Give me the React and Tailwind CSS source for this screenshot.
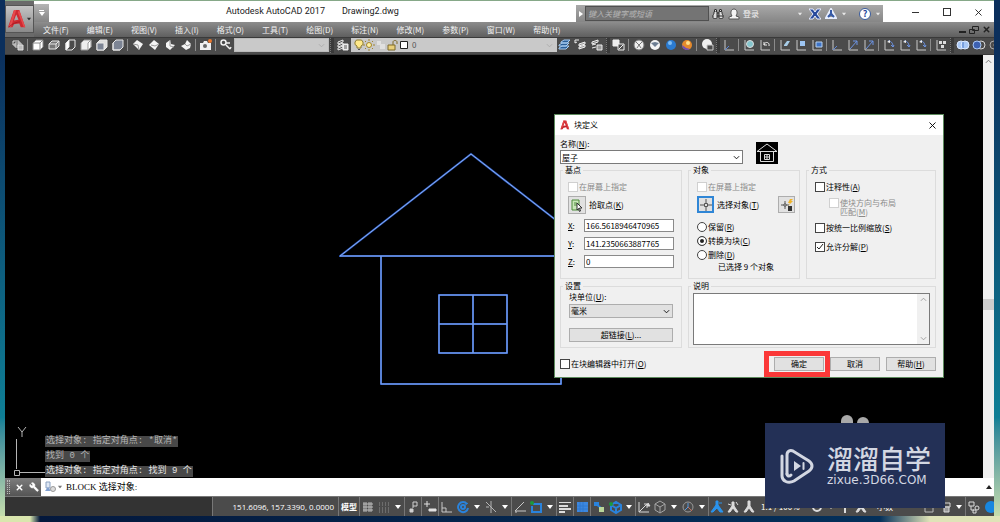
import { useState } from "react";
import { Binoculars, Wrench, X } from "lucide-react";

const MENUS = [
  "文件(F)",
  "编辑(E)",
  "视图(V)",
  "插入(I)",
  "格式(O)",
  "工具(T)",
  "绘图(D)",
  "标注(N)",
  "修改(M)",
  "参数(P)",
  "窗口(W)",
  "帮助(H)",
];

const HISTORY = [
  { text: "选择对象: 指定对角点: *取消*", tone: "text-[#b4b4b4]" },
  { text: "找到 0 个", tone: "text-[#b4b4b4]" },
  { text: "选择对象: 指定对角点: 找到 9 个", tone: "text-[#e4e4e4]" },
];

// ---------- icons (all drawn on a 14 x 14 grid) ----------

const UCS_AXES = <path d="M3 2v10h9" stroke="#c9c9c9" fill="none" />;

const ICONS = {
  views: (
    <g fill="#4b4b4b" stroke="#e0e0e0">
      <path d="M2 3h6v4H2zM4 5h6v4H4z" />
      <path d="M7 7h5v5H7z" fill="#bbb" />
    </g>
  ),
  cubeTop: (
    <g stroke="#8a8a8a">
      <path d="M2 5l3-3h7v7l-3 3H2z" fill="#fff" />
      <path d="M2 5h7v7M9 5l3-3" fill="none" />
    </g>
  ),
  cubeBottom: (
    <g stroke="#e8e8e8" fill="none">
      <path d="M2 6l3-3h7v5l-3 3H2z" fill="#777" />
      <path d="M2 6h7v5M9 6l3-3" />
    </g>
  ),
  cubeLeft: (
    <g stroke="#e8e8e8" fill="none">
      <path d="M3 5l3-3h6v7l-3 3H3z" />
      <path d="M3 5l3-3v7l-3 3z" fill="#fff" />
    </g>
  ),
  cubeRight: (
    <g stroke="#999">
      <path d="M2 5l3-3h7v7l-3 3H2z" fill="#eee" />
      <path d="M9 5l3-3v7l-3 3z" fill="#fff" />
    </g>
  ),
  cubeFront: (
    <g stroke="#e8e8e8">
      <path d="M2 5l3-3h7v7l-3 3H2z" fill="#ddd" />
      <path d="M2 5h7v7H2z" fill="#7c8494" />
    </g>
  ),
  cubeBack: (
    <g stroke="#e8e8e8">
      <path d="M2 5l3-3h7v7l-3 3H2z" fill="#7c8494" />
      <path d="M2 5v7h7l3-3" fill="none" />
    </g>
  ),
  isoSW: (
    <g>
      <path d="M2 6l4-4 6 4-4 6z" fill="#f4f4f4" />
      <path d="M2 6l5 1 1 5" stroke="#999" fill="none" />
    </g>
  ),
  isoSE: (
    <g>
      <path d="M2 7l5-5 5 4-4 6z" fill="#f4f4f4" />
      <path d="M4 7l4 1 4-2" stroke="#999" fill="none" />
    </g>
  ),
  isoNE: (
    <g>
      <path d="M3 5l4-3 1 4 4 1-5 5-4-3z" fill="#f4f4f4" />
      <path d="M7 2v6l4 1" stroke="#999" fill="none" />
    </g>
  ),
  isoNW: (
    <g>
      <path d="M2 8l4-2 2-4 4 4-1 4-4 2z" fill="#f4f4f4" />
      <path d="M6 6l2 2 4-2" stroke="#999" fill="none" />
    </g>
  ),
  camera: (
    <g>
      <path d="M1 5h3l1-2h3l1 2h3v7H1z" fill="#f0f0f0" />
      <circle cx="6" cy="8" r="2" fill="#666" />
      <circle cx="11" cy="3" r="2" fill="#e8772e" />
    </g>
  ),
  key: (
    <g fill="none" stroke="#f0f0f0" strokeWidth="1.5">
      <circle cx="4.500" cy="4.500" r="2.500" />
      <path d="M7 5h4M7 7l4 4M11 11l1-2" />
    </g>
  ),
  layers: (
    <g fill="#4b4b4b" stroke="#e8e8e8">
      <path d="M2 4l5-2v2L2 6zM2 7l5-2v2L2 9zM2 10l5-2v2l-5 2z" />
      <path d="M7 6h5v6H7z" fill="#eee" />
      <path d="M8 8h3M8 10h3" stroke="#555" />
    </g>
  ),
  layerCurrent: (
    <g stroke="#a9cdf3" fill="#2b5f98">
      <path d="M1 10l3-2h7l-3 3H1zM1 7l3-2h7l-3 3H1zM3 4l3-2h6l-3 3H3z" />
    </g>
  ),
  layerPrev: (
    <g stroke="#eee" fill="none">
      <path d="M1 5V2h4M3 4L1 5" />
      <path d="M5 6l6-2v2L5 8zM5 9l6-2v2l-6 2z" fill="#999" />
    </g>
  ),
  layerState: (
    <g stroke="#eee" fill="#777">
      <path d="M2 4l6-2v2L2 6zM2 7l4-1M2 10l4-1" />
      <path d="M7 7h5v5H7z" fill="#999" />
    </g>
  ),
  blocks: (
    <g stroke="#f0f0f0" fill="none">
      <path d="M1 2h6v6H1z" fill="#eee" />
      <path d="M6 6h6v6H6z" fill="#4b4b4b" />
      <path d="M7 11l4-4" />
    </g>
  ),
  wire: (
    <g stroke="#777" fill="#f0f0f0">
      <circle cx="7" cy="7" r="5" />
      <path d="M4 4l3 3 3-3M5 10l2-3 2 3" fill="none" />
    </g>
  ),
  hidden: (
    <g>
      <circle cx="7" cy="7" r="5" fill="#f4f4f4" />
      <path d="M3 5l4 4 4-4-4-1z" fill="#6c7d92" />
    </g>
  ),
  sphere: (
    <g>
      <circle cx="7" cy="7" r="5" fill="#2b7bd0" />
      <circle cx="6" cy="5" r="2" fill="#7fbdf5" />
    </g>
  ),
  realistic: (
    <g>
      <circle cx="7" cy="7" r="5" fill="#e58a2c" />
      <path d="M2 7a5 5 0 008 4Q5 10 2 7z" fill="#7450b5" />
      <circle cx="8" cy="5" r="2" fill="#ffe08a" />
    </g>
  ),
  manage: (
    <g>
      <circle cx="7" cy="6" r="5" fill="#f0f0f0" />
      <path d="M7 7h6v5H7z" fill="#4b4b4b" stroke="#ccc" />
    </g>
  ),
  ucs: (
    <g>
      {UCS_AXES}
      <path d="M3 12l4-4" stroke="#5c86d8" />
    </g>
  ),
  ucsWorld: (
    <g>
      {UCS_AXES}
      <circle cx="8" cy="6" r="3.500" fill="#84c4cc" stroke="#ddd" />
    </g>
  ),
  ucsPrev: (
    <g fill="none">
      {UCS_AXES}
      <path d="M6 7c1-4 6-3 5 1M6 4v3h3" stroke="#eee" />
    </g>
  ),
  ucsFace: (
    <g>
      {UCS_AXES}
      <path d="M6 7l3-4h3l-3 5H6z" fill="#a8cde8" />
    </g>
  ),
  ucsObject: (
    <g>
      {UCS_AXES}
      <path d="M6 3h5v5H6z" fill="#9ec6f3" />
    </g>
  ),
  ucsView: (
    <g>
      {UCS_AXES}
      <path d="M6 4h6v5H6z" fill="#3f74c7" stroke="#b8d2f0" />
    </g>
  ),
  ucsArrow: (
    <g fill="none">
      {UCS_AXES}
      <path d="M4 11l7-8M7 3h4v4" stroke="#6d94e4" />
    </g>
  ),
  ucsRotate: (
    <g fill="none">
      {UCS_AXES}
      <path d="M6 3c4 0 5 3 5 6M9 7l2 2 1-2" stroke="#6d94e4" />
      <path d="M5 4l3-2v3z" fill="#eee" />
    </g>
  ),
  ucsApply: (
    <g>
      {UCS_AXES}
      <path d="M5 3h3v3H5zM9 3h3v3H9zM7 7h3v3H7z" fill="#ddd" />
    </g>
  ),
  union: (
    <g fill="#a9c8f5" stroke="#dce9ff">
      <circle cx="5" cy="7" r="4" />
      <circle cx="9" cy="7" r="4" />
      <path d="M7 4v6" stroke="#4876c4" />
    </g>
  ),
  subtract: (
    <g fill="none" stroke="#d8d8d8">
      <circle cx="9" cy="7" r="4" />
      <circle cx="5" cy="7" r="4" fill="#3d61b0" stroke="#a9c8f5" />
    </g>
  ),
  intersect: (
    <g fill="none" stroke="#aaa">
      <circle cx="6" cy="7" r="4" />
      <circle cx="10" cy="7" r="4" />
    </g>
  ),
  // status bar
  grid: <path d="M3 2v10M5 2v10M8 2v10M10 2v10M2 4h10M2 7h10M2 10h10" stroke="#bdbdbd" />,
  snap: <path d="M2 3h10M2 5h10M2 8h10M2 10h10M2 12h10" stroke="#8f8f8f" strokeDasharray="1 2" />,
  infer: (
    <g stroke="#d0d0d0" fill="none">
      <path d="M7 8V2h4v4H7" />
      <path d="M4 9h3v3H4z" fill="#d0d0d0" />
    </g>
  ),
  dynamic: (
    <g stroke="#e0e0e0">
      <path d="M1 4h6M4 1v6" />
      <path d="M6 9h7v2H6z" fill="#e0e0e0" />
    </g>
  ),
  ortho: <path d="M2 2v10h10M2 8h4v4" stroke="#c8c8c8" fill="none" />,
  polar: (
    <g fill="none" stroke="#2a83dc" strokeWidth="2">
      <path d="M11 4a5 5 0 101 4" />
      <circle cx="7" cy="7" r="2" />
      <path d="M8 6l4-3" strokeWidth="1" />
    </g>
  ),
  isodraft: <path d="M2 2l10 10M7 1v12M2 7h3" stroke="#b5b5b5" />,
  tracking: <path d="M11 2L2 11h11M2 12h2" stroke="#c8c8c8" fill="none" />,
  osnap: (
    <g fill="none">
      <path d="M4 4h8v8H3V6" stroke="#2a83dc" strokeWidth="2" />
      <circle cx="3" cy="3" r="2" fill="#1d9a3a" />
    </g>
  ),
  lineweight: (
    <g fill="#dcdcdc">
      <path d="M1 2h12v1H1zM1 5h9v2H1zM1 8h12v2H1zM1 11h6v2H1z" />
    </g>
  ),
  transparency: (
    <g>
      <path d="M2 2h11v10H2z" fill="#3c87df" />
      <path d="M5 2v10M8 2v10M2 6h11M2 9h11" stroke="#2f78cf" />
    </g>
  ),
  cycling: (
    <g>
      <path d="M2 2h5v4H2z" fill="#2a83dc" />
      <path d="M4 4l5 4" stroke="#2a83dc" strokeWidth="2" />
      <path d="M7 7h5v5H7z" fill="#b9d69a" />
    </g>
  ),
  osnap3d: (
    <g fill="none" stroke="#2a83dc" strokeWidth="2">
      <path d="M3 5l5-3 5 3v5l-5 3-5-3zM3 5l5 3 5-3M8 8v5" />
      <circle cx="3" cy="4" r="2" fill="#1d9a3a" stroke="none" />
    </g>
  ),
  dynUcs: (
    <g stroke="#d8d8d8" fill="none">
      <path d="M2 2v10h10M2 12l8-8M7 4h3v4" />
      <path d="M11 3l2 3h-3z" fill="#d8d8d8" />
    </g>
  ),
  filter: <path d="M2 4l5-3 5 3v6l-5 3-5-3zM2 4l5 3 5-3M7 7v6" stroke="#a5a5a5" fill="none" />,
  gizmo: (
    <g fill="none">
      <circle cx="7" cy="7" r="5" stroke="#9a9a9a" />
      <path d="M7 3v4l-3 3" stroke="#5b9bde" />
      <path d="M7 7l4 4" stroke="#c26a5a" />
    </g>
  ),
  annoBlue: <path d="M6 1h2v4l5 7h-3L7 8l-4 4H1l5-7zM9 3h3" fill="#2a93ec" stroke="#2a93ec" />,
  annoAuto: <path d="M6 2h2v4l4 6h-2L7 8l-3 4H2l4-6zM10 2l2 3M2 4l3 1" fill="#dcdcdc" stroke="#dcdcdc" />,
  anno: <path d="M6 1h2v5l4 6h-2L7 8l-3 4H2l4-6z" fill="#dcdcdc" stroke="#dcdcdc" />,
  gear: (
    <g fill="none" stroke="#dcdcdc" strokeWidth="2">
      <circle cx="7" cy="7" r="4" />
    </g>
  ),
  plus: <path d="M7 1v12M2 7h10" stroke="#dcdcdc" strokeWidth="2" />,
  units: <path d="M3 2h8v10H3z" stroke="#bbb" fill="none" />,
  lockUi: (
    <g stroke="#dcdcdc" fill="none">
      <path d="M2 3h10v4H2z" />
      <path d="M6 7h5v5H6z" fill="#999" />
    </g>
  ),
  isolate: (
    <g stroke="#dcdcdc" fill="none">
      <path d="M2 2h5v4H2zM4 6v4h3" />
      <circle cx="10" cy="8" r="2" />
      <path d="M6 10h3v3H6z" />
    </g>
  ),
  hardware: <circle cx="8" cy="7" r="6" fill="#1787e0" />,
};

function Glyph({ name, className = "w-[14px] h-[14px]" }) {
  return (
    <svg viewBox="0 0 14 14" className={`shrink-0 ${className}`} aria-hidden="true">
      {ICONS[name]}
    </svg>
  );
}

function ToolButton({ name }) {
  return (
    <button aria-label={name} className="w-4 h-4 shrink-0 flex items-center justify-center hover:bg-white/20">
      <Glyph name={name} />
    </button>
  );
}

function ToolGroup({ names }) {
  return names.map((name) => <ToolButton key={name} name={name} />);
}

function Sep() {
  return <span className="w-px h-3 ml-px mr-[2px] shrink-0 bg-[#8b8b8b]" />;
}

function Grip() {
  return <span className="w-1 h-4 mx-px shrink-0 bg-[#3a3a3a] border-l border-dotted border-[#777]" />;
}

function Caret({ className = "text-white" }) {
  return (
    <svg viewBox="0 0 6 4" className={`w-[6px] h-[4px] shrink-0 ${className}`} aria-hidden="true">
      <path d="M0 0h6L3 4z" fill="currentColor" />
    </svg>
  );
}

function Chevron({ className = "text-[#444]" }) {
  return (
    <svg viewBox="0 0 8 5" className={`w-[7px] h-[5px] pointer-events-none ${className}`} aria-hidden="true">
      <path d="M1 1l3 3 3-3" fill="none" stroke="currentColor" />
    </svg>
  );
}

function LogoA({ className }) {
  return (
    <svg viewBox="0 0 24 26" className={className} aria-hidden="true">
      <path fillRule="evenodd" d="M8 1h7l8 23h-6l-2-5-7 1-2 4H0zM11 7l-3 8 6-1z" fill="#cf2a31" />
      <path d="M8 1h3L4 24H1zM15 1l8 23h-2L13 4z" fill="#e54a4d" />
      <path d="M1 24c5-5 10-7 15-7" stroke="#9c1a20" fill="none" />
    </svg>
  );
}

// ---------- header ----------

function TitleBar() {
  return (
    <div className="h-[21px] bg-white flex items-stretch pt-[3px]">
      <button aria-label="自定义快速访问工具栏" className="w-[15px] flex flex-col items-center justify-center gap-px bg-gradient-to-b from-[#b5b5b5] to-[#858585] text-white">
        <span className="w-[5px] h-px bg-white" />
        <Caret />
      </button>
      <div className="flex-1 flex items-center gap-[17px] pl-[177px] pb-1 text-[9px] leading-[14px] text-[#222] font-['Roboto','Noto_Sans',sans-serif] whitespace-nowrap">
        <span>Autodesk AutoCAD 2017</span>
        <span>Drawing2.dwg</span>
      </div>
      <div className="w-[307px] mt-px flex items-center bg-gradient-to-b from-[#a9a9a9] to-[#868686]">
        <button aria-label="展开" className="w-[9px] flex justify-center text-white">
          <svg viewBox="0 0 4 6" className="w-[4px] h-[6px]">
            <path d="M0 0l4 3-4 3z" fill="currentColor" />
          </svg>
        </button>
        <input
          aria-label="搜索"
          placeholder="键入关键字或短语"
          className="w-[124px] h-[15px] px-[2px] bg-[#747474] border border-[#505050] italic text-[8px] text-white placeholder:text-[#b4b4b4] outline-none"
        />
        <button aria-label="搜索按钮" className="ml-[3px] text-[#2e2e2e]">
          <Binoculars className="w-3 h-3" fill="#ddd" />
        </button>
        <button className="ml-1 flex items-center gap-[3px] text-[8px] text-[#f2f2f2]">
          <svg viewBox="0 0 12 12" className="w-3 h-3" fill="#f4f4f4" stroke="#555">
            <path d="M1 11V9l3-1c-2-3-1-7 2-7s4 4 2 7l3 1v2z" />
          </svg>
          登录
        </button>
        <span className="flex-1" />
        <Caret className="text-[#e8e8e8] scale-75" />
        <button aria-label="Exchange" className="ml-[6px]">
          <svg viewBox="0 0 12 12" className="w-3 h-3">
            <path d="M0 1h4l2 3 2-3h4L8 6l4 5H8L6 8l-2 3H0l4-5z" fill="#27499c" stroke="#e6ecff" />
          </svg>
        </button>
        <button aria-label="A360" className="ml-1 mr-1 flex items-center gap-1">
          <svg viewBox="0 0 12 12" className="w-3 h-3">
            <path d="M6 1l5 9H1z" fill="none" stroke="#e8efff" strokeWidth="2" />
            <path d="M6 2v4M3 9l3-3 3 3" fill="none" stroke="#355aa8" strokeWidth="2" />
          </svg>
          <Caret className="text-[#e8e8e8] scale-75" />
        </button>
        <button aria-label="帮助" className="ml-2 mr-[2px] flex items-center gap-1">
          <span className="w-3 h-3 rounded-full bg-white border border-[#3a5c9c] text-[#27499c] text-[9px] leading-[10px] font-bold">?</span>
          <Caret className="text-[#e8e8e8] scale-75" />
        </button>
      </div>
      <div className="w-[111px] flex items-center justify-end gap-[22px] pr-[10px] pb-[2px] text-[#222]">
        <button aria-label="最小化" className="w-[9px] h-[9px] flex items-center">
          <span className="w-[7px] h-px bg-[#333]" />
        </button>
        <button aria-label="最大化" className="w-[8px] h-[8px] border border-[#333]" />
        <button aria-label="关闭">
          <X className="w-[11px] h-[11px]" strokeWidth={2} />
        </button>
      </div>
    </div>
  );
}

function MenuBar() {
  return (
    <nav className="h-[15px] flex items-center pl-[9px] bg-gradient-to-b from-[#8d8d8d] to-[#5f5f5f] text-[8px] leading-[14px] text-[#f2f2f2]">
      <div className="flex flex-1 gap-[18px]">
        {MENUS.map((m) => (
          <button key={m} className="whitespace-nowrap">
            {m}
          </button>
        ))}
      </div>
      <div className="flex items-center gap-[3px] pr-[3px] text-[#222]">
        <button aria-label="最小化图形" className="w-[7px] h-[2px] mt-1 bg-[#222]" />
        <button aria-label="还原图形">
          <svg viewBox="0 0 10 8" className="w-[10px] h-[8px]" fill="none" stroke="currentColor">
            <path d="M3.500 .5h6v4h-6zM.5 3.500h5v4h-5z" />
          </svg>
        </button>
        <button aria-label="关闭图形">
          <X className="w-[9px] h-[9px]" strokeWidth={4} />
        </button>
      </div>
    </nav>
  );
}

function Toolbar() {
  return (
    <div className="h-[18px] flex items-center pl-[5px] pb-[2px] overflow-hidden bg-[#4b4b4b] border-y border-[#3a3a3a]">
      <ToolButton name="views" />
      <Sep />
      <ToolGroup names={["cubeTop", "cubeBottom", "cubeLeft", "cubeRight", "cubeFront", "cubeBack"]} />
      <Sep />
      <ToolGroup names={["isoSW", "isoSE", "isoNE", "isoNW"]} />
      <Sep />
      <ToolButton name="camera" />
      <Sep />
      <ToolButton name="key" />
      <div className="relative shrink-0 flex items-center">
        <select aria-label="视图" className="w-[95px] h-[14px] appearance-none bg-[#c9c9c9] border border-[#bbb]" />
        <Chevron className="absolute right-1 text-[#aaa]" />
      </div>
      <Grip />
      <ToolButton name="layers" />
      <button className="relative w-[206px] h-[14px] shrink-0 pl-[3px] flex items-center gap-[2px] bg-[#c9c9c9] text-[8px] text-[#555]">
        <svg viewBox="0 0 54 12" className="w-[54px] h-3" aria-hidden="true">
          <path d="M5 1a3 3 0 012 6v2H3V7a3 3 0 012-6z" fill="#ffe98a" stroke="#8a7a35" />
          <path d="M4 10h2v1H4z" fill="#555" />
          <circle cx="15" cy="6" r="2.500" fill="#fff0a0" stroke="#a08430" />
          <path d="M15 0v2M15 10v2M9 6h2M19 6h2M11 2l1 1M19 10l-1-1M11 10l1-1M19 2l-1 1" stroke="#a08430" />
          <path d="M23 2h4v4h-4zM26 5h5v5h-5z" fill="#e0e0e0" />
          <path d="M34 6h7v5h-7z" fill="#e8cf7a" stroke="#7e6a2a" />
          <path d="M39 6V3c0-2 4-2 4 0v2" fill="none" stroke="#7e6a2a" />
          <path d="M46.500 2.500h7v7h-7z" fill="#fff" stroke="#222" />
        </svg>
        <span className="pl-[2px]">0</span>
        <Chevron className="absolute right-1 text-[#aaa]" />
      </button>
      <ToolGroup names={["layerCurrent", "layerPrev", "layerState"]} />
      <Grip />
      <ToolButton name="blocks" />
      <Sep />
      <ToolGroup names={["wire", "hidden", "sphere", "realistic"]} />
      <Sep />
      <ToolButton name="manage" />
      <Grip />
      <ToolButton name="ucs" />
      <Sep />
      <ToolGroup names={["ucsWorld", "ucsPrev"]} />
      <Sep />
      <ToolGroup names={["ucsFace", "ucsObject", "ucsView"]} />
      <Sep />
      <ToolButton name="ucs" />
      <ToolButton name="ucsArrow" />
      <ToolButton name="ucsArrow" />
      <Sep />
      <ToolButton name="ucsRotate" />
      <ToolButton name="ucsRotate" />
      <ToolButton name="ucsRotate" />
      <Sep />
      <ToolButton name="ucsApply" />
      <Grip />
      <ToolGroup names={["union", "subtract", "intersect"]} />
    </div>
  );
}

// ---------- block definition dialog ----------

// "名称(N):" -> the letter in the brackets is the underlined access key
function Mnemonic({ text }) {
  const match = text.match(/^(.*\()(\w)(\).*)$/);
  if (!match) return text;
  return (
    <>
      {match[1]}
      <u>{match[2]}</u>
      {match[3]}
    </>
  );
}

function CheckRow({ text, disabled, checked, onChange, className = "" }) {
  return (
    <label className={`flex items-center gap-px leading-3 ${disabled ? "text-[#8a8a8a]" : ""} ${className}`}>
      <span className="relative shrink-0 w-[10px] h-[10px]">
        <input
          type="checkbox"
          checked={!!checked}
          disabled={disabled}
          onChange={(e) => onChange && onChange(e.target.checked)}
          className="block w-[10px] h-[10px] appearance-none bg-white border border-[#444] disabled:border-[#d0d0d0]"
        />
        {checked && (
          <svg viewBox="0 0 10 10" className="absolute inset-0 pointer-events-none" fill="none" stroke="#222">
            <path d="M2 5l2 2 4-5" />
          </svg>
        )}
      </span>
      <span>
        <Mnemonic text={text} />
      </span>
    </label>
  );
}

function RadioRow({ text, value, mode, setMode }) {
  return (
    <label className="h-[14px] flex items-center gap-px">
      <input
        type="radio"
        name="mode"
        value={value}
        checked={mode === value}
        onChange={() => setMode(value)}
        className="w-[10px] h-[10px] shrink-0 appearance-none rounded-full bg-white border border-[#444] checked:bg-[#222] checked:shadow-[inset_0_0_0_2px_white]"
      />
      <span>
        <Mnemonic text={text} />
      </span>
    </label>
  );
}

function Group({ title, className = "", children }) {
  return (
    <fieldset className="min-w-0 border border-[#dcdcdc]">
      <legend className="ml-[2px] px-[2px] leading-[10px]">{title}</legend>
      <div className={className}>{children}</div>
    </fieldset>
  );
}

function CoordRow({ axis, value, onChange }) {
  return (
    <label className="flex items-center h-[13px]">
      <span className="w-4">
        <u>{axis}</u>:
      </span>
      <input
        value={value}
        onChange={(e) => onChange(e.target.value)}
        className="flex-1 min-w-0 h-[13px] px-px bg-white border border-[#8a8a8a] outline-none"
      />
    </label>
  );
}

function DialogButton({ text, className = "w-[50px]" }) {
  return (
    <button className={`h-[14px] leading-3 bg-[#e1e1e1] border border-[#adadad] hover:border-[#0078d7] ${className}`}>
      <Mnemonic text={text} />
    </button>
  );
}

function BlockDialog() {
  const [name, setName] = useState("屋子");
  const [base, setBase] = useState({ X: "166.5618946470965", Y: "141.2350663887765", Z: "0" });
  const [mode, setMode] = useState("convert");
  const [annotative, setAnnotative] = useState(false);
  const [uniform, setUniform] = useState(false);
  const [explode, setExplode] = useState(true);
  const [openEditor, setOpenEditor] = useState(false);

  return (
    <section
      role="dialog"
      aria-label="块定义"
      className="absolute left-[549px] top-[59px] w-[390px] bg-[#f0f0f0] border border-[#5d8a5d] text-[8px] leading-[10px] text-black"
    >
      <header className="h-5 px-[5px] flex items-center bg-white">
        <LogoA className="w-[10px] h-[10px]" />
        <h2 className="flex-1 pl-1">块定义</h2>
        <button aria-label="关闭对话框">
          <X className="w-[11px] h-[11px]" strokeWidth={2} />
        </button>
      </header>

      <div className="pl-[5px] pr-[7px] pb-[6px]">
        <div className="flex items-end gap-[13px] pt-1">
          <div className="w-[183px]">
            <label htmlFor="block-name">
              <Mnemonic text="名称(N):" />
            </label>
            <div className="relative flex items-center mt-px">
              <input
                id="block-name"
                value={name}
                onChange={(e) => setName(e.target.value)}
                className="w-full h-[14px] px-px bg-white border border-[#7a7a7a] outline-none"
              />
              <Chevron className="absolute right-[3px]" />
            </div>
          </div>
          <svg viewBox="0 0 22 22" className="w-[22px] h-[22px]" aria-hidden="true">
            <path d="M0 0h22v22H0z" />
            <path d="M1 9.500L11 2l10 7.500zM4.500 9.500v10h13v-10M8.500 12.500h5v5h-5zM11 12v6M8 15h6" fill="none" stroke="#ddd" />
          </svg>
        </div>

        <div className="grid grid-cols-[122px_112px_1fr] gap-x-[6px] mt-px">
          <Group title="基点" className="px-[7px] pb-[10px]">
            <CheckRow text="在屏幕上指定" disabled className="pt-[6px]" />
            <div className="mt-[3px] flex items-center gap-[3px]">
              <button aria-label="拾取点" className="w-[18px] h-[18px] flex items-center justify-center bg-[#e1e1e1] border border-[#adadad]">
                <svg viewBox="0 0 14 14" className="w-[14px] h-[14px]">
                  <path d="M2 2h7v10H2z" fill="#c8e6b8" stroke="#4c8a3a" />
                  <path d="M4 5h3M4 7h3" stroke="#4c8a3a" />
                  <path d="M7 5l5 5H9.500l1 3-1 .5-1-3L7 12z" fill="#fff" stroke="#333" />
                </svg>
              </button>
              <span>
                <Mnemonic text="拾取点(K)" />
              </span>
            </div>
            <div className="mt-[5px] flex flex-col gap-[5px]">
              {["X", "Y", "Z"].map((axis) => (
                <CoordRow key={axis} axis={axis} value={base[axis]} onChange={(v) => setBase({ ...base, [axis]: v })} />
              ))}
            </div>
          </Group>

          <Group title="对象" className="px-2">
            <CheckRow text="在屏幕上指定" disabled className="pt-[6px]" />
            <div className="mt-[3px] flex items-center gap-[3px]">
              <button aria-label="选择对象" className="w-[17px] h-[17px] flex items-center justify-center bg-[#e1e1e1] border-2 border-[#2f86d6]">
                <svg viewBox="0 0 12 12" className="w-3 h-3" fill="none" stroke="#555">
                  <path d="M6 0v4M6 8v4M0 6h4M8 6h4" />
                  <path d="M4.500 4.500h3v3h-3z" />
                </svg>
              </button>
              <span className="flex-1 whitespace-nowrap">
                <Mnemonic text="选择对象(T)" />
              </span>
              <button aria-label="快速选择" className="w-[17px] h-[17px] -mr-[4px] flex items-center justify-center bg-[#e1e1e1] border border-[#adadad]">
                <svg viewBox="0 0 14 14" className="w-[14px] h-[14px]">
                  <path d="M5 3v8M1 7h8" stroke="#555" />
                  <path d="M4 6h2v2H4z" fill="#fff" stroke="#555" />
                  <path d="M10 1l-2 4h2l-2 3 5-5h-2l2-2z" fill="#f0b429" />
                  <path d="M8 8h4v5H8z" fill="#333" />
                </svg>
              </button>
            </div>
            <div className="mt-[7px]">
              <RadioRow text="保留(R)" value="retain" mode={mode} setMode={setMode} />
              <RadioRow text="转换为块(C)" value="convert" mode={mode} setMode={setMode} />
              <RadioRow text="删除(D)" value="delete" mode={mode} setMode={setMode} />
            </div>
            <p className="pl-[21px] whitespace-nowrap">已选择 9 个对象</p>
          </Group>

          <Group title="方式" className="px-2">
            <CheckRow text="注释性(A)" checked={annotative} onChange={setAnnotative} className="pt-[6px]" />
            <label className="mt-[5px] ml-[14px] flex items-start gap-px leading-[9px] text-[#8a8a8a]">
              <input type="checkbox" disabled className="w-[10px] h-[10px] shrink-0 appearance-none bg-white border border-[#d0d0d0]" />
              <span className="flex flex-col">
                <span>使块方向与布局</span>
                <span>
                  <Mnemonic text="匹配(M)" />
                </span>
              </span>
            </label>
            <CheckRow text="按统一比例缩放(S)" checked={uniform} onChange={setUniform} className="mt-[6px]" />
            <CheckRow text="允许分解(P)" checked={explode} onChange={setExplode} className="mt-[7px]" />
          </Group>
        </div>

        <div className="grid grid-cols-[122px_1fr] gap-x-[6px] mt-[2px]">
          <Group title="设置" className="px-2 pb-1">
            <label htmlFor="block-unit" className="block pt-px">
              <Mnemonic text="块单位(U):" />
            </label>
            <div className="relative flex items-center mt-[2px]">
              <select id="block-unit" className="w-full h-[14px] px-px appearance-none bg-[#e1e1e1] border border-[#adadad]">
                <option>毫米</option>
              </select>
              <Chevron className="absolute right-[3px]" />
            </div>
            <DialogButton text="超链接(L)..." className="w-full mt-[10px]" />
          </Group>

          <Group title="说明" className="pl-1 pr-[5px] pt-[2px] pb-[2px]">
            <div className="h-[52px] flex bg-white border border-[#7a7a7a]">
              <textarea aria-label="说明" className="flex-1 resize-none overflow-hidden outline-none" />
              <div className="w-3 bg-[#f0f0f0] flex flex-col items-center justify-between py-[3px]">
                <Chevron className="rotate-180 text-[#999]" />
                <Chevron className="text-[#999]" />
              </div>
            </div>
          </Group>
        </div>

        <div className="flex items-center mt-[9px]">
          <CheckRow text="在块编辑器中打开(O)" checked={openEditor} onChange={setOpenEditor} className="flex-1" />
          <div className="flex gap-[6px]">
            <div className="relative flex">
              <DialogButton text="确定" />
              <span className="absolute -left-[10px] -right-[6px] -top-[6px] -bottom-[6px] border-[5px] border-[#fb3838] pointer-events-none" />
            </div>
            <DialogButton text="取消" />
            <DialogButton text="帮助(H)" />
          </div>
        </div>
      </div>
    </section>
  );
}

// ---------- drawing area ----------

function Canvas() {
  return (
    <main className="relative flex-1 min-h-0 flex items-stretch bg-black">
      <svg viewBox="0 0 264 234" className="absolute left-[334px] top-[97px] w-[264px] h-[234px]" fill="none" aria-label="屋子">
        <g stroke="#2d57b5" strokeWidth="2">
          <path d="M1 104L132 2l131 102zM42 104v128h180V104M100 143h68v58h-68zM134 143v58M100 172h68" />
        </g>
        <g stroke="#86adf5" strokeWidth="1">
          <path d="M1 104L132 2l131 102zM42 104v128h180V104M100 143h68v58h-68zM134 143v58M100 172h68" />
        </g>
      </svg>

      <div className="flex-1 flex items-end">
        <svg viewBox="0 0 40 52" className="w-10 h-[52px] shrink-0" fill="none" stroke="#b5b5b5" aria-label="UCS">
          <path d="M13 1l4 5 4-5M17 6v5M11.500 13v30M9.500 44.500h5v5h-5zM15 46.500h25" />
        </svg>
        <ul className="pb-px flex flex-col items-start gap-1 text-[9px] leading-[11px] font-['Liberation_Mono','Noto_Sans_CJK_SC',monospace]">
          {HISTORY.map((line) => (
            <li key={line.text} className={`px-px bg-[#484848] ${line.tone}`}>
              {line.text}
            </li>
          ))}
        </ul>
      </div>

      <div className="w-[11px] flex flex-col items-center bg-[#f0f0f0] text-[#666]">
        <Chevron className="rotate-180 mt-[4px]" />
        <div className="mt-[235px] w-full h-[11px] bg-[#cdcdcd]" />
      </div>

      <BlockDialog />
    </main>
  );
}

function CommandLine() {
  return (
    <div className="h-[18px] flex items-center bg-white">
      <div className="h-full w-9 pl-[2px] flex items-center gap-[5px] bg-gradient-to-b from-[#7d7d7d] to-[#555] text-white">
        <span className="w-[3px] h-[14px] border-x border-dotted border-[#bbb]" />
        <button aria-label="关闭命令行">
          <X className="w-[9px] h-[9px]" strokeWidth={4} />
        </button>
        <button aria-label="自定义">
          <Wrench className="w-[10px] h-[10px] -scale-x-100" fill="white" />
        </button>
      </div>
      <button aria-label="最近使用的命令" className="ml-[3px] flex items-center gap-px">
        <svg viewBox="0 0 12 12" className="w-3 h-3">
          <path d="M2 1h4v6H2z" fill="#dfe8f5" stroke="#8aa0c0" />
          <path d="M1 10l3-4 3 4z" fill="#7f9fd0" />
          <circle cx="9" cy="8" r="2.500" fill="#ddd" stroke="#999" />
        </svg>
        <Caret className="text-[#777] scale-75" />
      </button>
      <label className="flex-1 flex items-center ml-[3px] gap-1 text-[9px] leading-[14px] whitespace-nowrap text-black font-['Liberation_Serif','Noto_Sans_CJK_SC',serif]">
        BLOCK 选择对象:
        <input aria-label="命令" className="flex-1 outline-none" />
      </label>
      <Caret className="mr-[2px] text-[#222] rotate-180" />
    </div>
  );
}

function StatusSep() {
  return <span className="w-px h-full shrink-0 bg-[#777]" />;
}

function StatusButton({ name, menu }) {
  return (
    <button aria-label={name} className={`h-full shrink-0 flex items-center ${menu ? "w-7 gap-[4px] pl-px" : "w-4 justify-center"}`}>
      <Glyph name={name} />
      {menu && <Caret />}
    </button>
  );
}

function StatusBar() {
  return (
    <footer className="h-5 flex items-stretch overflow-hidden bg-[#333] border-t border-[#777]">
      <div className="w-[207px] shrink-0" />
      <div className="flex-1 flex items-center overflow-hidden bg-[#4b4b4b] border-l border-[#777] text-[8px] text-white">
        <span className="w-[125px] pr-1 shrink-0 text-right font-['Open_Sans','Noto_Sans',sans-serif]">151.6096, 157.3390, 0.0000</span>
        <StatusSep />
        <button className="w-5 shrink-0 font-bold">模型</button>
        <StatusSep />
        <StatusButton name="grid" />
        <StatusButton name="snap" menu />
        <StatusSep />
        <StatusButton name="infer" />
        <StatusSep />
        <StatusButton name="dynamic" />
        <StatusSep />
        <StatusButton name="ortho" />
        <StatusButton name="polar" menu />
        <StatusButton name="isodraft" menu />
        <StatusSep />
        <StatusButton name="tracking" />
        <StatusButton name="osnap" menu />
        <StatusSep />
        <StatusButton name="lineweight" />
        <StatusSep />
        <StatusButton name="transparency" />
        <StatusSep />
        <StatusButton name="cycling" />
        <StatusButton name="osnap3d" menu />
        <StatusSep />
        <StatusButton name="dynUcs" />
        <StatusButton name="filter" menu />
        <StatusButton name="gizmo" menu />
        <StatusSep />
        <StatusButton name="annoBlue" />
        <StatusButton name="annoAuto" />
        <StatusButton name="anno" />
        <button className="w-[52px] pl-1 shrink-0 text-left">1:1 / 100%</button>
        <StatusButton name="gear" menu />
        <StatusButton name="plus" />
        <StatusButton name="anno" />
        <span className="w-[52px] shrink-0 pl-2">小数</span>
        <StatusButton name="units" />
        <StatusButton name="lockUi" menu />
        <StatusSep />
        <StatusButton name="isolate" />
        <StatusButton name="hardware" />
      </div>
    </footer>
  );
}

function Watermark() {
  return (
    <div className="absolute right-[55px] bottom-[14px] w-[180px] pointer-events-none">
      <div className="flex gap-1 pl-[76px] h-2 overflow-hidden">
        <span className="w-3 h-4 rounded-full bg-[#a9a9a9]" />
        <span className="w-3 h-4 mt-[2px] rounded-full bg-[#a9a9a9]" />
      </div>
      <div className="h-[85px] flex items-center gap-[12px] pl-[14px] bg-[#233056] text-[#d3d7e2]">
        <svg viewBox="0 0 36 36" className="w-9 h-9 shrink-0" fill="none" stroke="currentColor" strokeWidth="3" strokeLinecap="round">
          <path d="M8 26V7c0-4 3-5 6-4l16 10c4 3 4 7 0 10L15 33c-6 3-12 0-12-5V8" />
          <path d="M8 26c0 2 2 3 4 1" />
          <path d="M15 13v10l7-5z" fill="currentColor" stroke="none" />
          <path d="M24.500 15v6" strokeWidth="2" />
        </svg>
        <div className="pb-1 whitespace-nowrap">
          <p className="text-[26px] leading-[32px] font-medium">溜溜自学</p>
          <p className="text-[12px] leading-[12px] font-['DejaVu_Sans',sans-serif]">zixue.3D66.COM</p>
        </div>
      </div>
    </div>
  );
}

export default function App() {
  return (
    <div className="relative h-screen pl-[5px] pr-[6px] pb-[6px] flex flex-col overflow-hidden bg-gradient-to-b from-[#0b2f5c] from-10% via-[#0f7f96] via-80% to-[#cfe3ae] font-['Noto_Sans_CJK_SC',sans-serif]">
      <header className="flex bg-white border-t border-[#86a888]">
        <div className="w-[29px] shrink-0 pt-1 bg-[#6a6a6a]">
          <button aria-label="应用程序菜单" className="w-full h-[28px] pl-[2px] flex items-center bg-gradient-to-b from-[#c4c4c4] to-[#8a8a8a] border border-[#555]">
            <LogoA className="w-[18px] h-[20px]" />
            <Caret className="text-[#333] scale-75" />
          </button>
        </div>
        <div className="flex-1 min-w-0">
          <TitleBar />
          <MenuBar />
        </div>
      </header>
      <Toolbar />
      <Canvas />
      <CommandLine />
      <StatusBar />
      <div className="absolute inset-x-0 bottom-0 h-[6px] bg-[linear-gradient(to_right,#d9e6ae_3%,#04183c_4%,#04305a_88%,#dfe3b8_93%)]" />
      <Watermark />
    </div>
  );
}
